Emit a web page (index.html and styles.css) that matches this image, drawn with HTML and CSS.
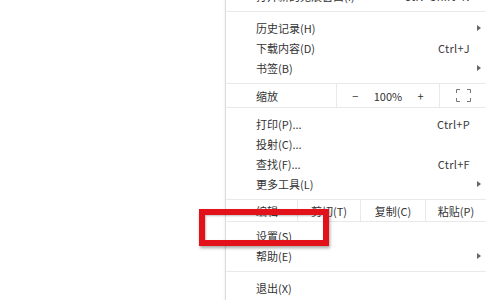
FILE: index.html
```html
<!DOCTYPE html>
<html lang="zh-CN">
<head>
    <meta charset="UTF-8">
    <title>菜单</title>
    <link rel="stylesheet" href="styles.css">
</head>
<body>
    <div class="page">
        <div class="menu">
            <div class="group first">
                <div class="item"><span class="label">打开新的无痕窗口(I)</span><span class="key">Ctrl+Shift+N</span><span></span></div>
            </div>

            <div class="group">
                <div class="item"><span class="label">历史记录(H)</span><span class="key"></span><span class="arrow"></span></div>
                <div class="item"><span class="label">下载内容(D)</span><span class="key">Ctrl+J</span><span></span></div>
                <div class="item"><span class="label">书签(B)</span><span class="key"></span><span class="arrow"></span></div>
            </div>

            <!-- zoom row -->
            <div class="group flat">
                <div class="zoom-row">
                    <div class="cell label-cell">缩放</div>
                    <div class="cell zoom-controls">
                        <span>−</span>
                        <span>100%</span>
                        <span>+</span>
                    </div>
                    <div class="cell full-cell">
                        <svg width="15" height="13" viewBox="0 0 15 13" fill="none" stroke="#777" stroke-width="1">
                            <path d="M0.5 4V0.5H4M11 0.5H14.5V4M14.5 9V12.5H11M4 12.5H0.5V9"/>
                        </svg>
                    </div>
                </div>
            </div>

            <div class="group">
                <div class="item"><span class="label">打印(P)...</span><span class="key">Ctrl+P</span><span></span></div>
                <div class="item"><span class="label">投射(C)...</span><span class="key"></span><span></span></div>
                <div class="item"><span class="label">查找(F)...</span><span class="key">Ctrl+F</span><span></span></div>
                <div class="item"><span class="label">更多工具(L)</span><span class="key"></span><span class="arrow"></span></div>
            </div>

            <!-- edit row -->
            <div class="group flat">
                <div class="edit-row">
                    <div class="cell label-cell">编辑</div>
                    <div class="cell">剪切(T)</div>
                    <div class="cell">复制(C)</div>
                    <div class="cell">粘贴(P)</div>
                </div>
            </div>

            <div class="group tight">
                <div class="item"><span class="label">设置(S)</span><span class="key"></span><span></span></div>
                <div class="item"><span class="label">帮助(E)</span><span class="key"></span><span class="arrow"></span></div>
            </div>

            <div class="group">
                <div class="item"><span class="label">退出(X)</span><span class="key"></span><span></span></div>
            </div>
        </div>

        <!-- red box drawn over the screenshot -->
        <div class="highlight"></div>
    </div>
</body>
</html>
```

FILE: styles.css
```css
body, html {
    margin: 0;
    padding: 0;
    background-color: #ffffff;
    font-family: "Noto Sans CJK SC", "Noto Sans", sans-serif;
    font-size: 11px;
    color: #333333;
}

.page {
    position: relative;
    height: 300px;
    display: flex;
    justify-content: flex-end;
    overflow: hidden;
}

/* Menu */
.menu {
    width: 260px;
    margin-top: -20px;
    border-left: 1px solid #dcdcdc;
    box-shadow: -1px 0 2px rgba(0, 0, 0, 0.05);
    align-self: flex-start;
}

.group {
    border-top: 1px solid #e9e9e9;
    padding: 6px 0 5px;
}

.group.first {
    border-top: none;
}

.group.flat {
    padding: 0;
}

.group.tight {
    padding-top: 4px;
}

.item {
    display: grid;
    grid-template-columns: 1fr auto 16px;
    align-items: center;
    height: 20px;
    padding-left: 30px;
    white-space: nowrap;
}

.key {
    color: #3a3a3a;
    letter-spacing: 0.3px;
}

.arrow {
    width: 0;
    height: 0;
    margin-left: 7px;
    border-left: 4px solid #666;
    border-top: 3px solid transparent;
    border-bottom: 3px solid transparent;
}

/* Zoom and edit rows */
.zoom-row {
    display: grid;
    grid-template-columns: 110px 103px 1fr;
    height: 23px;
}

.edit-row {
    display: grid;
    grid-template-columns: 71px 63px 65px 1fr;
    height: 21px;
}

.cell {
    display: flex;
    align-items: center;
    justify-content: center;
    border-left: 1px solid #e9e9e9;
    white-space: nowrap;
}

.cell.label-cell {
    justify-content: flex-start;
    padding-left: 30px;
    border-left: none;
}

.zoom-controls {
    justify-content: space-evenly;
}

.full-cell {
    justify-content: flex-start;
    padding-left: 16px;
}

/* Red annotation box */
.highlight {
    position: absolute;
    left: 199px;
    top: 209px;
    width: 130px;
    height: 37px;
    box-sizing: border-box;
    border: 6px solid #e3121a;
    box-shadow: 1px 2px 3px rgba(0, 0, 0, 0.35), inset 1px 1px 2px rgba(0, 0, 0, 0.25);
}
```
